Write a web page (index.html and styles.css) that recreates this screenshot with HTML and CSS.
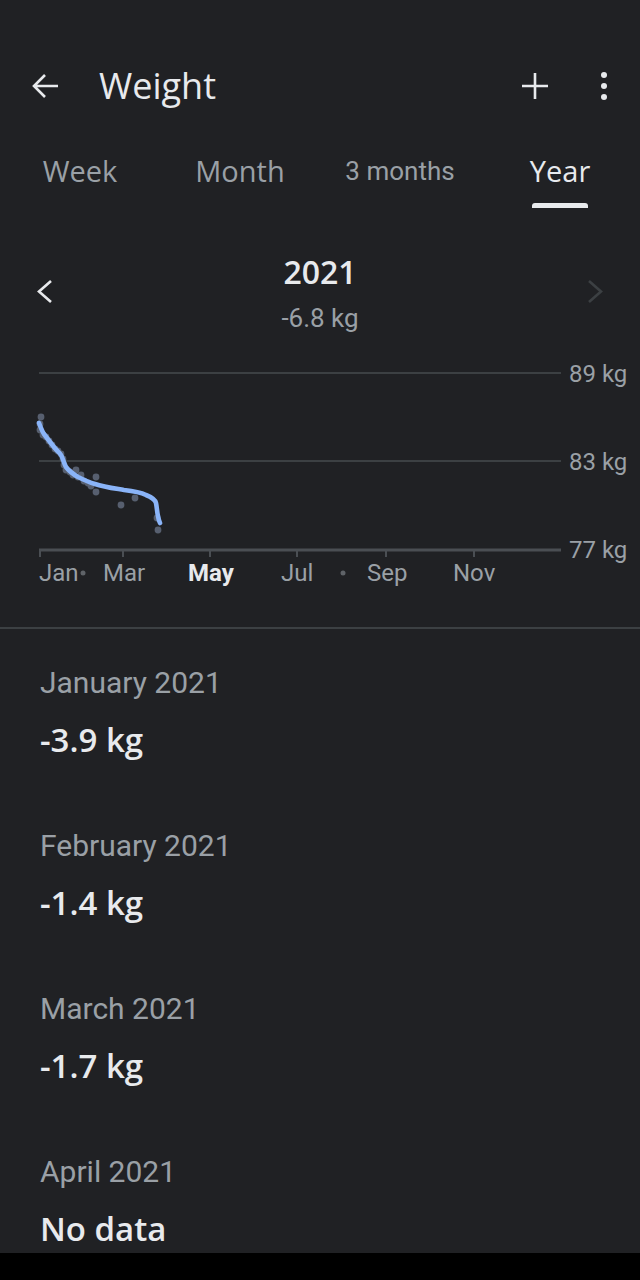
FILE: index.html
```html
<!DOCTYPE html>
<html lang="en">
<head>
    <meta charset="UTF-8">
    <meta name="viewport" content="width=device-width, initial-scale=1.0">
    <title>Weight</title>
    <link rel="stylesheet" href="styles.css">
</head>
<body>

    <div class="app">
        <header class="toolbar">
            <svg class="icon-back" width="28" height="28" viewBox="0 0 28 28">
                <path d="M2 14H26M13 3L2 14L13 25" fill="none" stroke="#e8eaed" stroke-width="2.6"/>
            </svg>
            <h1 class="title">Weight</h1>
            <svg class="icon-add" width="28" height="28" viewBox="0 0 28 28">
                <path d="M14 1V27M1 14H27" fill="none" stroke="#e8eaed" stroke-width="2.6"/>
            </svg>
            <svg class="icon-more" width="8" height="28" viewBox="0 0 8 28">
                <circle cx="4" cy="3" r="3" fill="#e8eaed"/>
                <circle cx="4" cy="14" r="3" fill="#e8eaed"/>
                <circle cx="4" cy="25" r="3" fill="#e8eaed"/>
            </svg>
        </header>

        <nav class="tabs">
            <div class="tab"><span class="tab-label">Week</span></div>
            <div class="tab"><span class="tab-label">Month</span></div>
            <div class="tab"><span class="tab-label tab-small">3 months</span></div>
            <div class="tab active"><span class="tab-label">Year</span><span class="indicator"></span></div>
        </nav>

        <section class="period">
            <svg class="chevron" width="18" height="24" viewBox="0 0 18 24">
                <path d="M15 1L3 11.5L15 22" fill="none" stroke="#e8eaed" stroke-width="2.6"/>
            </svg>
            <div class="period-info">
                <div class="period-year">2021</div>
                <div class="period-delta">-6.8 kg</div>
            </div>
            <svg class="chevron" width="18" height="24" viewBox="0 0 18 24">
                <path d="M3 1L15 11.5L3 22" fill="none" stroke="#3c4043" stroke-width="2.6"/>
            </svg>
        </section>

        <svg class="chart" width="640" height="260" viewBox="0 340 640 260">
            <!-- grid -->
            <line x1="39" y1="373" x2="561" y2="373" stroke="#3c4043" stroke-width="2"/>
            <line x1="39" y1="461" x2="561" y2="461" stroke="#3c4043" stroke-width="2"/>
            <line x1="39" y1="550" x2="561" y2="550" stroke="#4a4e53" stroke-width="3"/>
            <g stroke="#4a4e53" stroke-width="2">
                <line x1="40" y1="550" x2="40" y2="557"/>
                <line x1="123" y1="550" x2="123" y2="557"/>
                <line x1="210" y1="550" x2="210" y2="557"/>
                <line x1="297" y1="550" x2="297" y2="557"/>
                <line x1="386" y1="550" x2="386" y2="557"/>
                <line x1="474" y1="550" x2="474" y2="557"/>
            </g>

            <g class="axis-label">
                <text x="569" y="382">89 kg</text>
                <text x="569" y="470">83 kg</text>
                <text x="569" y="558">77 kg</text>
                <text x="39" y="581">Jan</text>
                <text x="103" y="581">Mar</text>
                <text x="188" y="581" class="axis-current">May</text>
                <text x="281" y="581">Jul</text>
                <text x="367" y="581">Sep</text>
                <text x="453" y="581">Nov</text>
            </g>
            <circle cx="83" cy="573" r="2.5" fill="#5f6368"/>
            <circle cx="343" cy="573" r="2.5" fill="#5f6368"/>

            <!-- daily readings -->
            <g fill="#5d6678" fill-opacity="0.9">
                <circle cx="41" cy="417" r="3.4"/>
                <circle cx="40" cy="424" r="3.4"/>
                <circle cx="40" cy="430" r="3.4"/>
                <circle cx="43" cy="435" r="3.4"/>
                <circle cx="46" cy="437" r="3.4"/>
                <circle cx="49" cy="441" r="3.4"/>
                <circle cx="52" cy="445" r="3.4"/>
                <circle cx="55" cy="449" r="3.4"/>
                <circle cx="58" cy="451" r="3.4"/>
                <circle cx="61" cy="454" r="3.4"/>
                <circle cx="63" cy="459" r="3.4"/>
                <circle cx="64" cy="465" r="3.4"/>
                <circle cx="66" cy="470" r="3.4"/>
                <circle cx="70" cy="472" r="3.4"/>
                <circle cx="73" cy="475" r="3.4"/>
                <circle cx="76" cy="470" r="3.4"/>
                <circle cx="78" cy="477" r="3.4"/>
                <circle cx="81" cy="475" r="3.4"/>
                <circle cx="84" cy="481" r="3.4"/>
                <circle cx="88" cy="483" r="3.4"/>
                <circle cx="91" cy="486" r="3.4"/>
                <circle cx="96" cy="477" r="3.4"/>
                <circle cx="96" cy="492" r="3.4"/>
                <circle cx="121" cy="505" r="3.4"/>
                <circle cx="135" cy="498" r="3.4"/>
                <circle cx="157" cy="518" r="3.4"/>
                <circle cx="158" cy="530" r="3.4"/>
            </g>

            <!-- trend -->
            <path d="M39 423 C41 428 42 431 44 434 C47 438 50 442 54 447 C57 451 59 452 61 455 C63 458 64 464 66 467 C69 471 73 474 78 477 C84 480 88 482 95 484 C104 487 112 488 124 490 C133 491 140 492 146 495 C151 497 155 499 156 503 C157 508 157 512 158 516 C158.5 519 159 521 160 523"
                  fill="none" stroke="#8ab4f8" stroke-width="4.6" stroke-linecap="round" stroke-linejoin="round"/>
        </svg>

        <div class="divider"></div>

        <ul class="months">
            <li>
                <div class="month-name">January 2021</div>
                <div class="month-value">-3.9 kg</div>
            </li>
            <li>
                <div class="month-name">February 2021</div>
                <div class="month-value">-1.4 kg</div>
            </li>
            <li>
                <div class="month-name">March 2021</div>
                <div class="month-value">-1.7 kg</div>
            </li>
            <li>
                <div class="month-name">April 2021</div>
                <div class="month-value">No data</div>
            </li>
        </ul>
    </div>

</body>
</html>
```

FILE: styles.css
```css
/* ====== base ====== */
* {
    margin: 0;
    padding: 0;
    box-sizing: border-box;
}

body {
    background: #000;
    font-family: 'Roboto', 'Liberation Sans', sans-serif;
    color: #e8eaed;
}

.app {
    height: 1253px;
    overflow: hidden;
    background: #202124;
}

/* ====== toolbar ====== */
.toolbar {
    display: flex;
    align-items: center;
    height: 122px;
    padding-top: 50px;
}

.icon-back {
    margin-left: 32px;
}

.title {
    flex: 1;
    margin-left: 39px;
    font-family: 'Open Sans', sans-serif;
    font-size: 36px;
    font-weight: 400;
    line-height: 1;
    color: #e8eaed;
}

.icon-more {
    margin-left: 51px;
    margin-right: 32px;
}

/* ====== tabs ====== */
.tabs {
    display: grid;
    grid-template-columns: repeat(4, 1fr);
    height: 88px;
}

.tab {
    display: flex;
    flex-direction: column;
    align-items: center;
    padding-top: 30px;
}

.tab-label {
    font-family: 'Open Sans', sans-serif;
    font-size: 29px;
    line-height: 38px;
    color: #9aa0a6;
}

.tab-label.tab-small {
    font-family: 'Roboto', sans-serif;
    font-size: 26px;
}

.tab.active .tab-label {
    color: #e8eaed;
}

.indicator {
    width: 56px;
    height: 5px;
    margin-top: 13px;
    background: #e8eaed;
    border-radius: 3px 3px 0 0;
}

/* ====== period header ====== */
.period {
    display: flex;
    align-items: flex-start;
    padding: 44px 36px 0;
}

.chevron {
    margin-top: 26px;
}

.period-info {
    flex: 1;
    text-align: center;
}

.period-year {
    font-family: 'Open Sans', sans-serif;
    font-size: 32px;
    font-weight: 600;
    line-height: 36px;
    color: #e8eaed;
}

.period-delta {
    margin-top: 14px;
    font-size: 26px;
    line-height: 28px;
    color: #9aa0a6;
}

/* ====== chart ====== */
.chart {
    display: block;
    margin-top: 8px;
}

.axis-label text {
    font-family: 'Roboto', sans-serif;
    font-size: 24px;
    fill: #9aa0a6;
}

.axis-label .axis-current {
    font-weight: 700;
    fill: #e8eaed;
}

.divider {
    height: 2px;
    margin-top: 27px;
    background: #3c4043;
}

/* ====== monthly list ====== */
.months {
    list-style: none;
    padding: 36px 40px 0;
}

.months li + li {
    margin-top: 68px;
}

.month-name {
    font-size: 30px;
    line-height: 36px;
    color: #9aa0a6;
}

.month-value {
    margin-top: 19px;
    font-family: 'Open Sans', sans-serif;
    font-size: 33px;
    font-weight: 600;
    line-height: 40px;
    color: #e8eaed;
}
```
